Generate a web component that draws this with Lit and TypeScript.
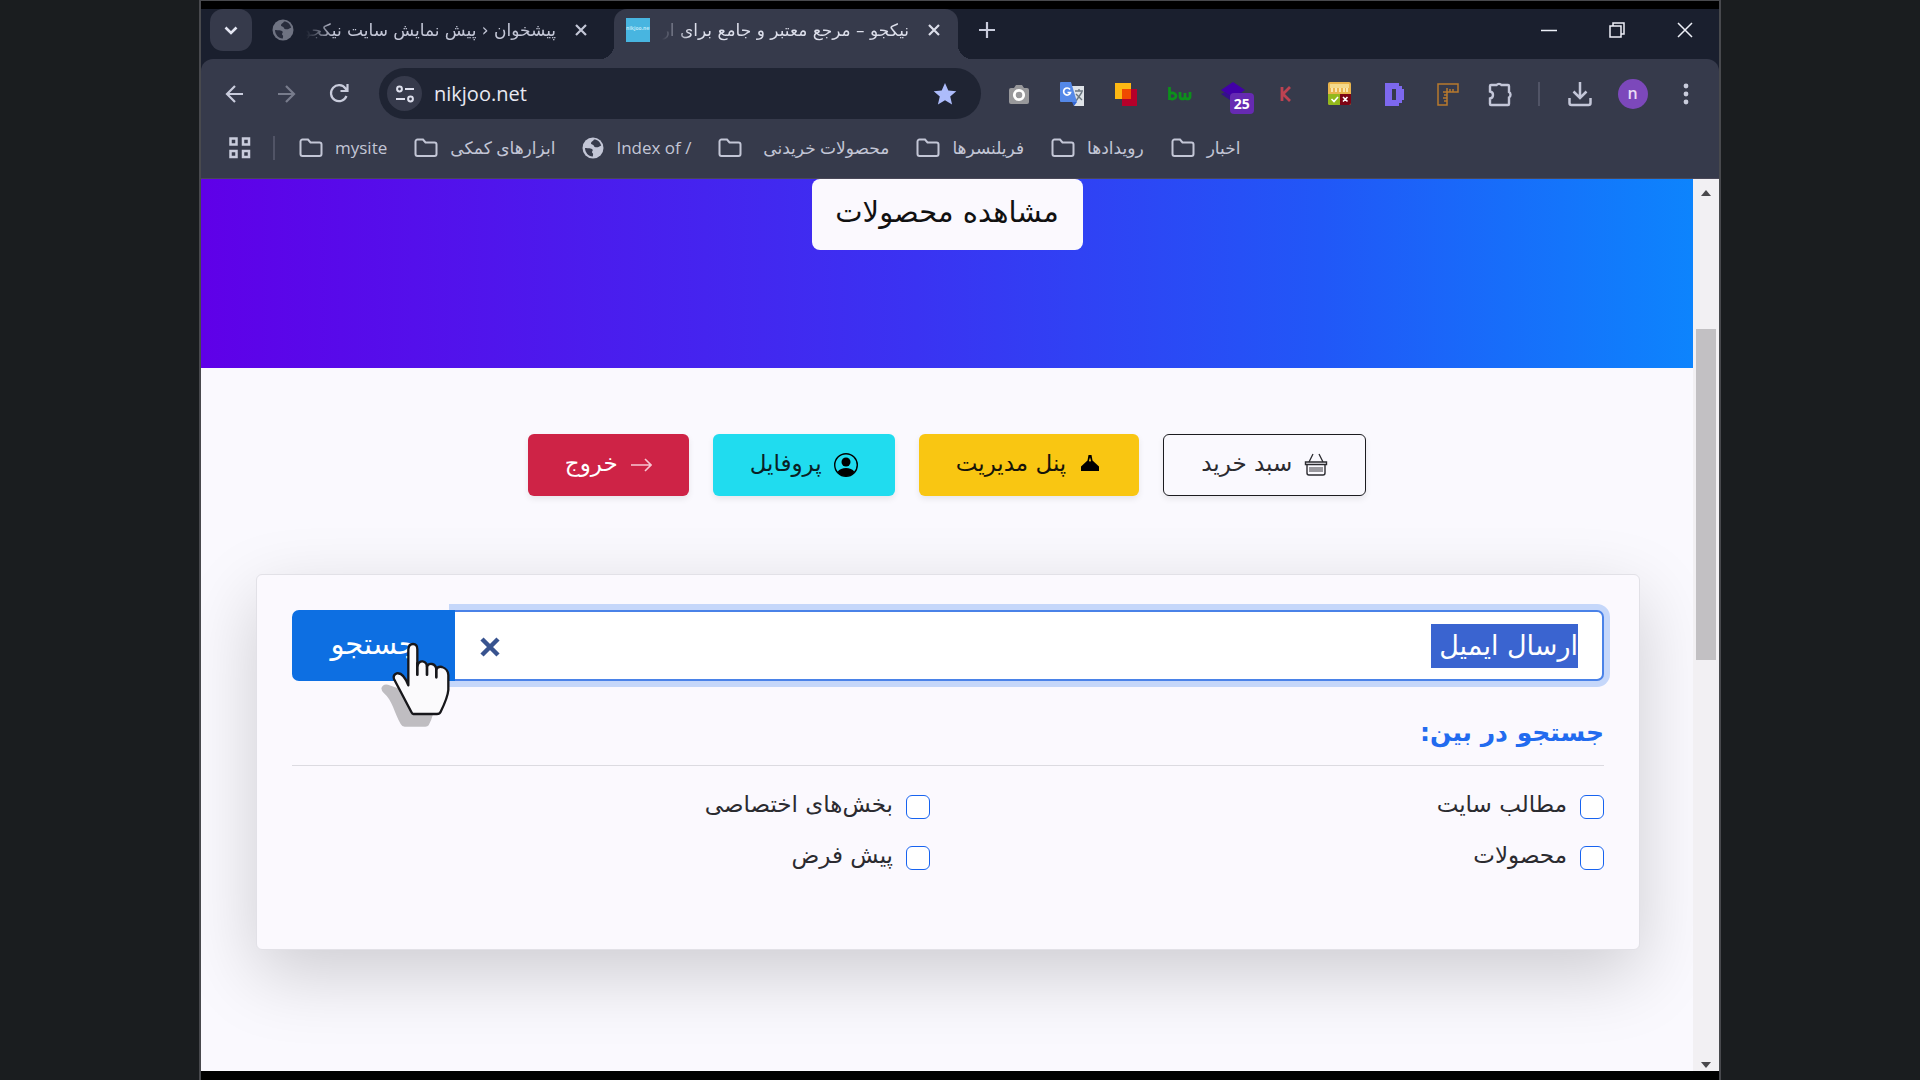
import { LitElement, html, css, svg } from "lit";
import { customElement, query } from "lit/decorators.js";

const folder = html`<svg class="icon" width="24" height="20" viewBox="0 0 24 20"><path d="M1.500 3.500a2 2 0 0 1 2-2h5.500l2.500 3h9a2 2 0 0 1 2 2v9.500a2 2 0 0 1-2 2h-17a2 2 0 0 1-2-2z" fill="none" stroke="currentColor" stroke-width="2"/></svg>`;

const globe = html`<svg class="icon" width="22" height="22" viewBox="0 0 22 22"><circle cx="11" cy="11" r="10.500" fill="currentColor"/><path d="M3 11c3 .3 6.500 0 7.500 1.500s-1.500 2 0 3.500c1.200 1 .3 2.500.3 3.500-4 .3-7.800-4-7.800-8.500zM12 2.500c-.5 2-2.800 1.500-3 3.500s2.500 1.200 3 3 3.500 1.500 5 .8 2-1.300 2.300-.8c-.8-3.800-3.800-6.500-7.300-6.500z" fill="#363a4b"/></svg>`;

const cross = html`<svg width="14" height="14" viewBox="0 0 14 14"><path d="M2 2l10 10M12 2L2 12" stroke="currentColor" stroke-width="2.200" fill="none"/></svg>`;

const extensionIcons = [
  { name: "Screenshot", art: svg`<path d="M2 8a2 2 0 0 1 2-2h3l2-3h6l2 3h3a2 2 0 0 1 2 2v12a2 2 0 0 1-2 2H4a2 2 0 0 1-2-2z" fill="#98989b"/><circle cx="12" cy="13" r="4.700" fill="none" stroke="#fff" stroke-width="2.800"/>` },
  { name: "Translate", art: svg`<path d="M11 4h13v20H14z" fill="#dfe3e8"/><path d="M15 9h8M19 7v2M16 19l6-9M16 12l6 6" stroke="#6b7680" stroke-width="1.400" fill="none"/><path d="M0 1a1 1 0 0 1 1-1h10l6 20H1a1 1 0 0 1-1-1z" fill="#5488e8"/><path d="M12 20h5l-3 4z" fill="#3367d6"/><path d="M10 7.500A3.500 3.500 0 1 0 10.500 10.500H7.500" fill="none" stroke="#fff" stroke-width="1.700"/>` },
  { name: "Squares", art: svg`<path d="M1 1h16v16H1z" fill="#fdb813"/><path d="M8 7h15v17H8z" fill="#b5002a"/><path d="M8 7h9v10H8z" fill="#f04a00"/>` },
  { name: "bw", art: svg`<path d="M2.500 5v13M2.500 12a3.700 3 0 1 1 0 4M13 10v5a2.600 2.600 0 0 0 5 0v-4 4a2.600 2.600 0 0 0 5 0v-5" fill="none" stroke="#0d8f1c" stroke-width="2.800"/>` },
  { name: "Layers", badge: "25", art: svg`<path d="M12 0l12 8-12 8L0 8z" fill="#4200a8"/><path d="M0 12l4-2 8 5 8-5 4 2-12 8z" fill="#35108a"/>` },
  { name: "K", art: svg`<path d="M8 5v14M16 5l-7 7 7 7" fill="none" stroke="#bd4251" stroke-width="2.800"/>` },
  { name: "Checker", art: svg`<rect width="23" height="23" rx="2" fill="#e9b44c"/><path d="M2 2h19v4H2z" fill="#f4d98c"/><path d="M4 6v4M8 6v4M12 6v4M16 6v4M19 6v4" stroke="#fff3d0" stroke-width="1.500"/><path d="M0 12h12v11H2a2 2 0 0 1-2-2z" fill="#93b81c"/><path d="M12 12h11v9a2 2 0 0 1-2 2h-9z" fill="#7d0414"/><path d="M3.500 17l2.500 2.500 4-4.500M15 15l4.500 4.500M19.500 15L15 19.500" stroke="#fff" stroke-width="1.600" fill="none"/>` },
  { name: "D", art: svg`<path fill-rule="evenodd" d="M4 1h14v3h3v3h2v11h-2v3h-3v3H4zM11 7v11h4V7z" fill="#7d68ee"/>` },
  { name: "Ruler", art: svg`<path d="M3 2h20v8H12v13H3zM12 10V6M15 10V7M18 10V7M12 10H8M12 13H9M12 16H8M12 19H9" fill="none" stroke="#b87a2e" stroke-width="1.500"/>` },
  { name: "Extensions", art: svg`<path d="M3 3h5.500a3 2.500 0 0 1 5 0H20a1 1 0 0 1 1 1v6a2.500 3 0 0 1 0 5.500V22a1 1 0 0 1-1 1H3a1 1 0 0 1-1-1v-5.500c4-.5 4-6.500 0-7V4a1 1 0 0 1 1-1z" fill="none" stroke="#c3c6d8" stroke-width="2.400"/>` },
];

const bookmarks = [
  { label: "mysite", icon: folder },
  { label: "ابزارهای کمکی", icon: folder },
  { label: "Index of /", icon: globe },
  { label: "محصولات خریدنی\u00a0\u00a0", icon: folder },
  { label: "فریلنسرها", icon: folder },
  { label: "رویدادها", icon: folder },
  { label: "اخبار", icon: folder },
];

@customElement("browser-chrome")
class BrowserChrome extends LitElement {
  static styles = css`
    :host { display: block; color: #c9ccdc; font-family: "Open Sans", "Noto Sans", "DejaVu Sans", sans-serif; }
    button { appearance: none; border: 0; padding: 0; margin: 0; background: none; color: inherit; font: inherit; display: grid; place-items: center; flex: none; }
    svg { display: block; flex: none; overflow: visible; }
    .tabs { background: #1a1f2e; height: 50px; display: flex; }
    .tab-list { width: 42px; height: 42px; border-radius: 13px; background: #363a4b; margin: 0 20px 0 9px; color: #e4e6f2; }
    .tab { display: flex; align-items: center; height: 42px; gap: 12px; color: #c3c6d6; }
    .tab.idle { width: 342px; }
    .tab.active { width: 344px; height: 50px; box-sizing: border-box; padding: 0 16px 8px 12px; background: #363a4b; border-radius: 13px 13px 0 0; position: relative; color: #dcdeea; }
    .tab.active::before, .tab.active::after { content: ""; position: absolute; bottom: 0; width: 14px; height: 14px; }
    .tab.active::before { right: 100%; background: radial-gradient(circle at 0 0, transparent 14px, #363a4b 14px); }
    .tab.active::after { left: 100%; background: radial-gradient(circle at 100% 0, transparent 14px, #363a4b 14px); }
    .tab .icon { opacity: .5; }
    .title { flex: 1; min-width: 0; overflow: hidden; white-space: nowrap; direction: rtl; font: 17px/42px "DejaVu Sans", sans-serif; mask-image: linear-gradient(to right, transparent, #000 28px); }
    .tab button { width: 26px; height: 26px; }
    .idle button { margin-right: 20px; }
    .active button { margin-right: -5px; }
    .favicon { width: 24px; height: 24px; background: #48b5e0; color: #b8e6f7; font: 700 5px/20px "Open Sans", sans-serif; text-align: center; overflow: hidden; flex: none; }
    .new { width: 58px; height: 42px; }
    .window-controls { margin-left: auto; display: flex; color: #eef0f8; }
    .window-controls button { width: 68px; height: 42px; }
    .shell { background: #1a1f2e; }
    .bar { background: #363a4b; border-bottom: 1px solid #4a4858; border-radius: 12px 12px 0 0; padding-top: 9px; height: 110px; }
    .tools { display: flex; align-items: center; height: 51px; padding: 0 7px 0 6px; }
    .nav { width: 53px; height: 44px; }
    .dim { opacity: .45; }
    .address { box-sizing: border-box; width: 602px; height: 51px; border-radius: 26px; background: #1f2433; display: flex; align-items: center; margin-left: 13px; padding: 0 20px 0 8px; gap: 12px; }
    .info { width: 35px; height: 35px; border-radius: 50%; background: #363a4b; }
    input { flex: 1; min-width: 0; background: none; border: 0; outline: 0; padding: 0; color: #e8e9f2; font: 20px/28px "Open Sans", "Noto Sans", sans-serif; }
    .extensions { display: flex; flex: 1; justify-content: space-between; padding: 0 26px 0 26px; }
    .extensions button { width: 24px; height: 24px; position: relative; }
    .badge { position: absolute; left: 9px; top: 11px; background: #662ab2; color: #fff; border-radius: 4px; font: 700 14px/21px "Open Sans", sans-serif; padding: 0 4px; }
    .split { width: 2px; height: 24px; background: #515466; }
    .right { display: flex; align-items: center; }
    .right button { width: 53px; height: 40px; }
    .right .download { margin-left: 13px; }
    .avatar { width: 30px; height: 30px; border-radius: 50%; background: #7c48bb; color: #e9dcf5; font: 600 16px/28px "Open Sans", sans-serif; }
    .marks { display: flex; align-items: center; height: 58px; padding-left: 28px; gap: 27px; }
    .marks a { display: flex; align-items: center; gap: 12px; color: #c3c6d6; text-decoration: none; font: 17px/24px "Open Sans", "DejaVu Sans", sans-serif; white-space: nowrap; }
    .marks .split { margin: 0 -3px 0 -5px; }
  `;
  render() {
    return html`
      <div class="tabs">
        <button class="tab-list" aria-label="Search tabs"><svg width="14" height="9" viewBox="0 0 14 9"><path d="M1.500 1.500L7 7l5.500-5.500" fill="none" stroke="currentColor" stroke-width="2.600"/></svg></button>
        <div class="tab idle">${globe}<span class="title">پیشخوان ‹ پیش نمایش سایت نیکجو</span><button aria-label="Close tab">${cross}</button></div>
        <div class="tab active"><span class="favicon">nikjoo.net</span><span class="title">نیکجو – مرجع معتبر و جامع برای ار</span><button aria-label="Close tab">${cross}</button></div>
        <button class="new" aria-label="New tab"><svg width="16" height="16" viewBox="0 0 16 16"><path d="M8 0v16M0 8h16" stroke="currentColor" stroke-width="2.200"/></svg></button>
        <div class="window-controls">
          <button aria-label="Minimize"><svg width="16" height="16" viewBox="0 0 16 16"><path d="M0 8.500h16" stroke="currentColor" stroke-width="1.500"/></svg></button>
          <button aria-label="Restore"><svg width="16" height="16" viewBox="0 0 16 16"><path d="M1 4h11v11H1zM4 4V1h11v11h-3" fill="none" stroke="currentColor" stroke-width="1.500"/></svg></button>
          <button aria-label="Close"><svg width="16" height="16" viewBox="0 0 16 16"><path d="M1 1l14 14M15 1L1 15" stroke="currentColor" stroke-width="1.500"/></svg></button>
        </div>
      </div>
      <div class="shell"><div class="bar">
        <div class="tools">
          <button class="nav" aria-label="Back"><svg width="18" height="18" viewBox="0 0 18 18"><path d="M18 9H2M10 1L2 9l8 8" fill="none" stroke="currentColor" stroke-width="2.200"/></svg></button>
          <button class="nav dim" aria-label="Forward"><svg width="18" height="18" viewBox="0 0 18 18"><path d="M0 9h16M8 1l8 8-8 8" fill="none" stroke="currentColor" stroke-width="2.200"/></svg></button>
          <button class="nav" aria-label="Reload"><svg width="19" height="19" viewBox="0 0 19 19"><path d="M16.500 12A8 8 0 1 1 15.500 4.500L17 6.500M17.500 0v7h-7" fill="none" stroke="currentColor" stroke-width="2.200"/></svg></button>
          <div class="address">
            <button class="info" aria-label="Site information"><svg width="18" height="16" viewBox="0 0 18 16"><path d="M9 3h9M0 13h9" stroke="#dfe1ee" stroke-width="2.200"/><circle cx="3.500" cy="3" r="2.400" fill="none" stroke="#dfe1ee" stroke-width="2"/><circle cx="14.500" cy="13" r="2.400" fill="none" stroke="#dfe1ee" stroke-width="2"/></svg></button>
            <input aria-label="Address" .value=${"nikjoo.net"} />
            <button aria-label="Bookmark this page"><svg width="32" height="24" viewBox="0 0 32 24"><path d="M16 1l3.300 7.500 8 .7-6.100 5.300 1.900 8L16 18.300 8.900 22.500l1.900-8-6.100-5.300 8-.7z" fill="#adbcfb"/></svg></button>
          </div>
          <div class="extensions">${extensionIcons.map(e => html`<button aria-label=${e.name}><svg width="24" height="24" viewBox="0 0 24 24">${e.art}</svg>${e.badge ? html`<span class="badge">${e.badge}</span>` : ""}</button>`)}</div>
          <div class="right">
            <span class="split"></span>
            <button class="download" aria-label="Downloads"><svg width="24" height="24" viewBox="0 0 24 24"><path d="M12 0v15M5.500 9.500L12 16l6.500-6.500M1.500 16v5a2 2 0 0 0 2 2h17a2 2 0 0 0 2-2v-5" fill="none" stroke="#c3c6d8" stroke-width="2.500"/></svg></button>
            <button aria-label="Profile"><span class="avatar">n</span></button>
            <button aria-label="Menu"><svg width="6" height="22" viewBox="0 0 6 22"><g fill="currentColor"><circle cx="3" cy="3" r="2.400"/><circle cx="3" cy="11" r="2.400"/><circle cx="3" cy="19" r="2.400"/></g></svg></button>
          </div>
        </div>
        <nav class="marks">
          <button aria-label="Apps"><svg width="22" height="22" viewBox="0 0 22 22"><path d="M1.500 1.500h6v6h-6zM14 1.500h6v6h-6zM1.500 14h6v6h-6zM14 14h6v6h-6z" fill="none" stroke="currentColor" stroke-width="2.500"/></svg></button>
          <span class="split"></span>
          ${bookmarks.map(b => html`<a href="#">${b.icon}<span dir="auto">${b.label}</span></a>`)}
        </nav>
      </div></div>`;
  }
}

const actions = [
  { label: "سبد خرید", kind: "outline", icon: html`<svg width="24" height="24" viewBox="0 0 24 24"><path d="M9 1L5 9M15 1l4 8" stroke="currentColor" stroke-width="1.300" fill="none"/><path d="M1.500 9h21v2.500h-21zM3 11.500v8.500a2 2 0 0 0 2 2h14a2 2 0 0 0 2-2v-8.500" fill="none" stroke="currentColor" stroke-width="1.400"/><path d="M5 14h14v5H5z" fill="#99989e"/></svg>` },
  { label: "پنل مدیریت", kind: "yellow", icon: html`<svg width="24" height="24" viewBox="0 0 24 24"><path d="M10.500 2h3l1 5.500 6.500 6V18H3v-4.500l6.500-6z" fill="#000"/><path d="M12 4.500l1 3-1 1.500-1-1.500z" fill="#f9c612"/></svg>` },
  { label: "پروفایل", kind: "cyan", icon: html`<svg width="24" height="24" viewBox="0 0 24 24"><circle cx="12" cy="12" r="11.300" fill="none" stroke="#000" stroke-width="1.400"/><circle cx="12" cy="9" r="4.500" fill="#000"/><path d="M3.500 19c2-3 5-4 8.500-4s6.500 1 8.500 4c-4 5.500-13 5.500-17 0z" fill="#000"/></svg>` },
  { label: "خروج", kind: "red", icon: html`<svg width="22" height="24" viewBox="0 0 22 24"><path d="M1 12h20M15 6l6 6-6 6" fill="none" stroke="#f7c6d2" stroke-width="1.600"/></svg>` },
];

const scopes = ["مطالب سایت", "بخش‌های اختصاصی", "محصولات", "پیش فرض"];

@customElement("search-page")
class SearchPage extends LitElement {
  static styles = css`
    :host { display: block; direction: rtl; background: #faf9fe; color: #2b2b30; font-family: "DejaVu Sans", sans-serif; overflow: hidden; }
    * { box-sizing: border-box; }
    button, a { font: inherit; color: inherit; text-decoration: none; }
    svg { display: block; flex: none; }
    .hero { height: 189px; background: linear-gradient(90deg, #5f00e8, #3a33f2 48%, #2157f7 75%, #0d84fd); display: flex; justify-content: center; align-items: flex-start; }
    .products { height: 71px; width: 271px; border-radius: 8px; background: #fbf9fe; color: #111; font-size: 29px; line-height: 66px; text-align: center; white-space: nowrap; }
    .actions { display: flex; justify-content: center; gap: 24px; padding-top: 66px; }
    .actions a { display: flex; align-items: center; gap: 12px; height: 62px; padding: 0 37px; border-radius: 6px; font-size: 23px; box-shadow: 0 3px 6px rgba(0, 0, 0, .08); white-space: nowrap; }
    .actions span { line-height: 56px; padding-bottom: 4px; }
    .outline { border: 1px solid #1c1c20; }
    .yellow { background: #f9c612; color: #16140a; }
    .cyan { background: #20dcef; color: #0a2024; }
    .red { background: #ce2346; color: #fff; }
    .card { margin: 78px 53px 0 55px; height: 376px; padding: 35px; border: 1px solid #e2e1e7; border-radius: 6px; background: #fbf9fe; box-shadow: 0 24px 72px rgba(0, 0, 0, .18); }
    .group { display: flex; height: 71px; position: relative; }
    .field { flex: 1; min-width: 0; display: flex; align-items: center; background: #fff; border: 2px solid #4a82e8; border-left: 0; border-radius: 0 7px 7px 0; box-shadow: 0 0 0 6px #c5d7fa; padding: 0 24px 0 25px; }
    .field input { flex: 1; min-width: 0; height: 44px; border: 0; outline: 0; padding: 0; background: none; font: 27px/44px "DejaVu Sans", sans-serif; color: #212529; caret-color: transparent; }
    .field input::selection { background: #3a64d0; color: #fff; }
    .clear { border: 0; padding: 0; background: none; margin-top: 3px; }
    .submit { width: 163px; border: 0; border-radius: 7px 0 0 7px; background: #0d6fe2; color: #fff; font-size: 29px; padding: 0 0 4px; }
    .hand { position: absolute; left: 86px; top: 30px; overflow: visible; pointer-events: none; }
    h2 { margin: 0; padding: 27px 0 7px; border-bottom: 1px solid #dcdbe1; color: #226bef; font-size: 25px; line-height: 50px; font-weight: 700; }
    .scopes { display: grid; grid-template-columns: 1fr 1fr; column-gap: 36px; row-gap: 16px; margin-top: 23px; }
    .scope { display: flex; align-items: center; gap: 13px; height: 35px; font-size: 23px; }
    .scope span { line-height: 30px; padding-bottom: 5px; }
    .scope input { appearance: none; width: 24px; height: 24px; margin: 0; border: 1px solid #1763f0; border-radius: 6px; background: #fff; }
  `;
  @query("#term") term!: HTMLInputElement;
  firstUpdated() {
    this.term.focus();
    this.term.select();
  }
  render() {
    return html`
      <section class="hero"><a class="products" href="#">مشاهده محصولات</a></section>
      <nav class="actions">${actions.map(a => html`<a class=${a.kind} href="#">${a.icon}<span>${a.label}</span></a>`)}</nav>
      <form class="card" @submit=${(e: Event) => e.preventDefault()}>
        <div class="group">
          <div class="field">
            <input id="term" type="text" aria-label="جستجو" .value=${"ارسال ایمیل "} />
            <button class="clear" type="button" aria-label="پاک کردن"><svg width="20" height="20" viewBox="0 0 20 20"><path d="M2 2l16 16M18 2L2 18" stroke="#38538f" stroke-width="4.500"/></svg></button>
          </div>
          <button class="submit">جستجو</button>
          <svg class="hand" width="77" height="90" viewBox="410 240 231 270">
            <path d="M420 385q4-14 20-11l34 12 56 74h46q-6 22-14 36-3 4-10 4h-62q-8 0-12-8c-18-30-26-74-50-92q-8-8-8-15z" fill="#000" fill-opacity=".24"/>
            <path d="M501 376V268q1-16 14-16t13 16v50q4-15 16-14 12 2 13 15 4-9 15-7 12 3 13 16 5-10 17-7 18 6 19 24v45q-2 23-23 65-3 7-11 7h-71q-3 0-6-6L458 357q-4-12 8-17 20-4 35 36z" fill="#fbfafc" stroke="#17171b" stroke-width="7" stroke-linejoin="round"/>
            <path d="M528 310v34M557 318v26M585 326v26" stroke="#17171b" stroke-width="8" stroke-linecap="round" fill="none"/>
          </svg>
        </div>
        <h2>جستجو در بین:</h2>
        <div class="scopes">${scopes.map(s => html`<label class="scope"><input type="checkbox" /><span>${s}</span></label>`)}</div>
      </form>`;
  }
}

@customElement("app-root")
class AppRoot extends LitElement {
  static styles = css`
    :host { display: block; background: #1a1d1f; }
    .window { margin: 0 199px; box-sizing: border-box; min-height: 100vh; background: #000; border: 2px solid #48494d; border-width: 1px 2px 0; padding: 8px 0 9px; display: flex; flex-direction: column; }
    .view { flex: 1; display: flex; background: #f2f0f3; }
    search-page { flex: 1; min-width: 0; }
    .scroll { width: 26px; display: flex; flex-direction: column; align-items: center; padding: 11px 0 3px; box-sizing: border-box; }
    .scroll svg { display: block; }
    .thumb { width: 20px; height: 331px; background: #c2c0c3; margin-top: 133px; margin-bottom: auto; }
  `;
  render() {
    return html`<div class="window">
      <browser-chrome></browser-chrome>
      <div class="view">
        <search-page></search-page>
        <div class="scroll">
          <svg width="10" height="6" viewBox="0 0 10 6"><path d="M0 6l5-6 5 6z" fill="#4a494c"/></svg>
          <div class="thumb"></div>
          <svg width="10" height="6" viewBox="0 0 10 6"><path d="M0 0l5 6 5-6z" fill="#4a494c"/></svg>
        </div>
      </div>
    </div>`;
  }
}
